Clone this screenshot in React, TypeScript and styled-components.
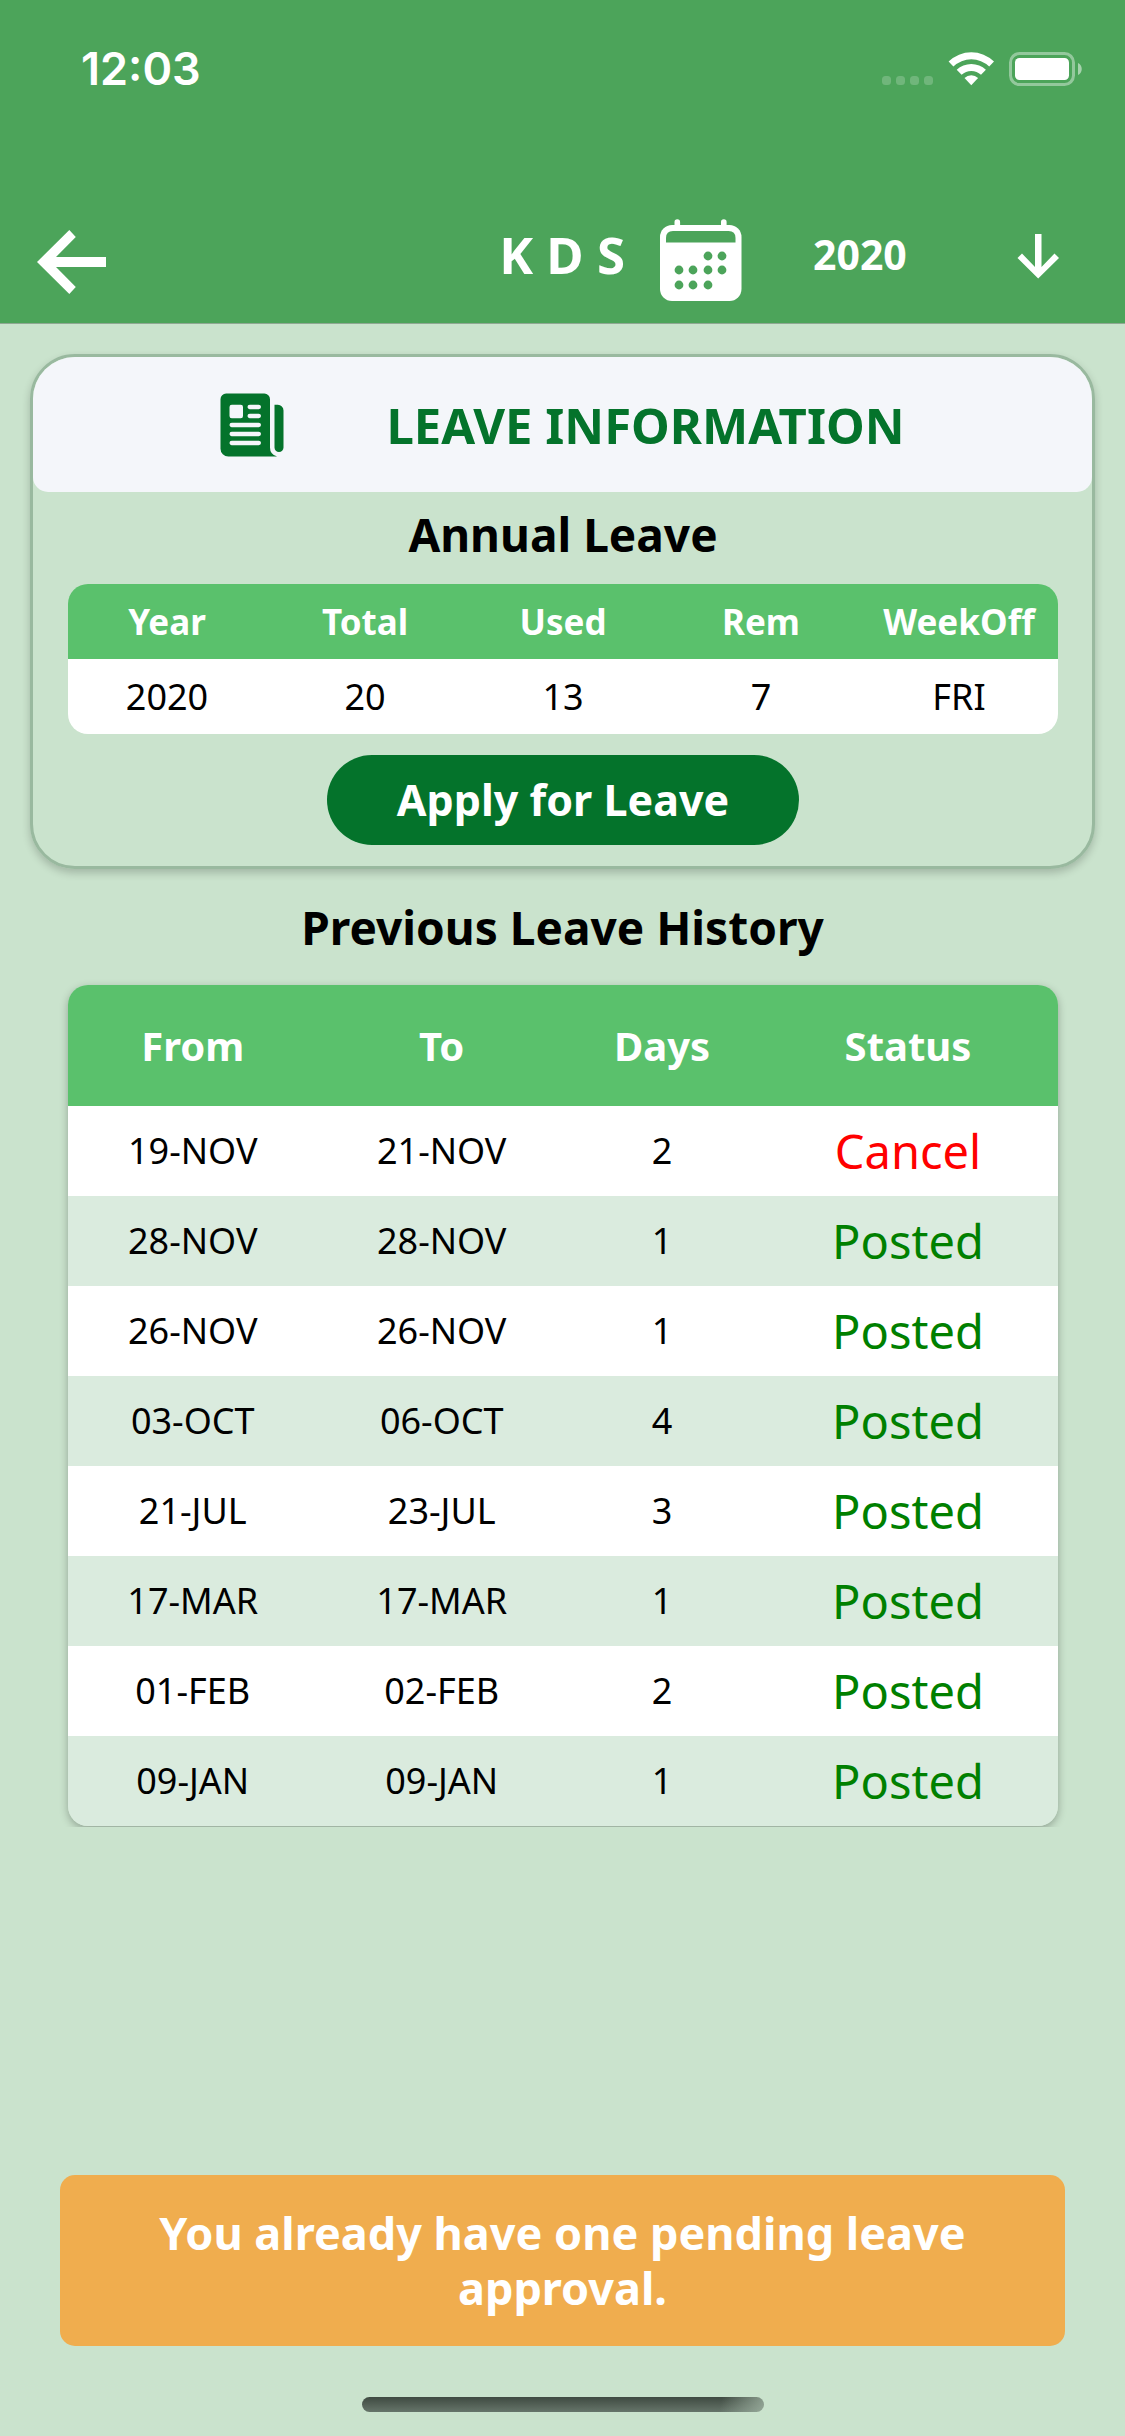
import React from "react";
import styled, { createGlobalStyle } from "styled-components";
import { IoNewspaper } from "react-icons/io5";

const color = {
  bar: "#4ca45a",
  page: "#cae3cd",
  tableHead: "#5ac16c",
  dark: "#04732b",
  stripe: "#daebde",
  border: "#99b99f",
  panel: "#f4f6fa",
  warning: "#f0ad4e",
};

const font = '"Noto Sans", "Open Sans", sans-serif';

const GlobalStyle = createGlobalStyle`
  *, *::before, *::after { box-sizing: border-box; }
  body { margin: 0; background: ${color.page}; }
  button, select { font: inherit; color: inherit; border: 0; background: none; padding: 0; margin: 0; }
  h1, h2, p { margin: 0; }
  svg { display: block; flex: none; }
`;

const Screen = styled.div`
  display: flex;
  flex-direction: column;
  min-height: 100vh;
  background: ${color.page};
  color: #000;
  font-family: ${font};
`;

const Header = styled.header`
  background: ${color.bar};
  border-bottom: 1px solid #8fa893;
  color: #fff;
`;

const StatusBar = styled.div`
  display: flex;
  align-items: center;
  justify-content: space-between;
  height: 132px;
  padding: 6px 43px 0 81px;
`;

const Clock = styled.time`
  font-family: Inter, sans-serif;
  font-size: 45px;
  font-weight: 600;
  line-height: 54px;
`;

const NavBar = styled.nav`
  display: flex;
  align-items: center;
  justify-content: space-between;
  padding: 74px 60px 21px 30px;
`;

const IconButton = styled.button`
  cursor: pointer;
`;

const NavGroup = styled.div`
  display: flex;
  align-items: center;
`;

const Brand = styled.span`
  font-size: 51px;
  font-weight: 700;
  line-height: 64px;
  margin-right: 28px;
`;

const YearPicker = styled.label`
  display: flex;
  align-items: center;
  gap: 104px;
  margin-left: 64px;
`;

const YearSelect = styled.select`
  appearance: none;
  font-size: 41px;
  font-weight: 700;
  line-height: 56px;
  outline: none;
`;

const Content = styled.main`
  padding: 30px 30px 0;
`;

const Card = styled.section`
  border: 3px solid ${color.border};
  border-radius: 45px;
  box-shadow: 0 4px 8px rgba(0, 0, 0, 0.2);
  overflow: hidden;
  padding-bottom: 21px;
`;

const CardHeader = styled.header`
  display: flex;
  align-items: center;
  justify-content: center;
  gap: 98px;
  height: 135px;
  padding-right: 4px;
  border-radius: 0 0 15px 15px;
  background: ${color.panel};
  color: ${color.dark};
`;

const CardTitle = styled.h1`
  font-size: 49px;
  font-weight: 700;
  line-height: 64px;
`;

const SectionTitle = styled.h2<{ $line: number }>`
  font-size: 46px;
  font-weight: 700;
  line-height: ${(p) => p.$line}px;
  text-align: center;
`;

const CardBody = styled.div`
  display: flex;
  flex-direction: column;
  padding: 0 34px 0 35px;
`;

const TableFrame = styled.div<{ $raised?: boolean }>`
  border-radius: 20px;
  ${(p) =>
    p.$raised
      ? `
    margin: 0 37px 0 38px;
    box-shadow: 0 3px 8px rgba(0, 0, 0, 0.28);
    clip-path: inset(-16px -16px -1px -16px);
  `
      : "margin-top: 8px;"}
`;

const Table = styled.table<{ $head: number; $row: number; $headText: number }>`
  width: 100%;
  table-layout: fixed;
  border-collapse: collapse;
  border-radius: 20px;
  overflow: hidden;
  text-align: center;
  font-size: 36px;
  line-height: 50px;

  th, td { padding: 0; }
  th {
    height: ${(p) => p.$head}px;
    background: ${color.tableHead};
    color: #fff;
    font-size: ${(p) => p.$headText}px;
    font-weight: 700;
  }
  td { height: ${(p) => p.$row}px; }
  tbody tr { background: #fff; }
  tbody tr:nth-child(even) { background: ${color.stripe}; }
`;

const Column = styled.col<{ $share: number }>`
  width: ${(p) => p.$share}%;
`;

const StatusCell = styled.td<{ $cancelled: boolean }>`
  color: ${(p) => (p.$cancelled ? "#ff0000" : "#008000")};
  font-size: 47px;
`;

const ApplyButton = styled.button`
  align-self: center;
  height: 90px;
  margin-top: 21px;
  padding: 0 70px;
  border-radius: 45px;
  background: ${color.dark};
  color: #fff;
  font-size: 43px;
  font-weight: 700;
  line-height: 60px;
  cursor: pointer;
`;

const Footer = styled.footer`
  display: flex;
  flex-direction: column;
  margin-top: auto;
  padding: 40px 60px 24px;
`;

const Toast = styled.p`
  padding: 30px 60px 31px;
  border-radius: 15px;
  background: ${color.warning};
  color: #fff;
  font-size: 45px;
  font-weight: 700;
  line-height: 55px;
  text-align: center;
`;

const HomeIndicator = styled.div`
  align-self: center;
  width: 40%;
  height: 15px;
  margin-top: 51px;
  border-radius: 8px;
  background:
    linear-gradient(100deg, transparent 89%, rgba(160, 180, 163, 0.8) 100%),
    linear-gradient(#3f4a41, #66756a);
`;

const StatusIcons = () => (
  <svg width="200" height="36" viewBox="882 51 200 36" fill="#fff" aria-hidden="true">
    <g opacity="0.2">
      <rect x="882" y="76" width="9" height="9" rx="3.5" />
      <rect x="896" y="76" width="9" height="9" rx="3.5" />
      <rect x="910" y="76" width="9" height="9" rx="3.5" />
      <rect x="924" y="76" width="9" height="9" rx="3.5" />
    </g>
    <path d="M948.6 61.500a32.500 32.500 0 0 1 45.400 0l-4.800 5a25.800 25.800 0 0 0 -35.800 0z" />
    <path d="M956.700 69.800a21 21 0 0 1 29.200 0l-4.900 5a14 14 0 0 0 -19.400 0z" />
    <path d="M964.500 78a10 10 0 0 1 13.600 0l-6.800 7.200z" />
    <rect x="1010.500" y="53.500" width="63" height="31" rx="9" fill="none" stroke="#fff" strokeWidth="3" opacity="0.4" />
    <rect x="1015" y="58" width="54" height="22" rx="4.500" />
    <path d="M1078 63c5 2 5 10 0 12z" opacity="0.5" />
  </svg>
);

const BackArrow = () => (
  <svg width="84" height="96" viewBox="30 206 84 96" fill="#fff" aria-hidden="true">
    <path d="M37 262L69.300 230L75.800 237L56 257H106V267H56L75.800 287L69.300 294Z" />
  </svg>
);

const dots = [
  [708, 256], [722, 256],
  [679, 270], [693, 270], [708, 270], [722, 270],
  [679, 285], [693, 285], [708, 285],
];

const CalendarIcon = () => (
  <svg width="96" height="96" viewBox="653 206 96 96" aria-hidden="true">
    <path fill="#fff" d="M674.500 226V222a2.800 2.800 0 0 1 5.600 0V226ZM721 226V222a2.800 2.800 0 0 1 5.600 0V226Z" />
    <rect x="660" y="225" width="81.500" height="76" rx="12" fill="#fff" />
    <path fill={color.bar} d="M666 242.500V238q0-7 7-7H728.500q7 0 7 7V242.500Z" />
    {dots.map(([x, y]) => (
      <circle key={`${x}-${y}`} cx={x} cy={y} r="4.400" fill={color.bar} />
    ))}
  </svg>
);

const DownArrow = () => (
  <svg width="54" height="96" viewBox="1011 206 54 96" fill="#fff" aria-hidden="true">
    <path d="M1035 234H1041.500V267L1054.500 253.500L1059 258L1038.200 278.500L1017.500 258L1022 253.500L1035 267Z" />
  </svg>
);

const allowance = [
  ["Year", "2020"],
  ["Total", "20"],
  ["Used", "13"],
  ["Rem", "7"],
  ["WeekOff", "FRI"],
];

const history = [
  { from: "19-NOV", to: "21-NOV", days: 2, status: "Cancel" },
  { from: "28-NOV", to: "28-NOV", days: 1, status: "Posted" },
  { from: "26-NOV", to: "26-NOV", days: 1, status: "Posted" },
  { from: "03-OCT", to: "06-OCT", days: 4, status: "Posted" },
  { from: "21-JUL", to: "23-JUL", days: 3, status: "Posted" },
  { from: "17-MAR", to: "17-MAR", days: 1, status: "Posted" },
  { from: "01-FEB", to: "02-FEB", days: 2, status: "Posted" },
  { from: "09-JAN", to: "09-JAN", days: 1, status: "Posted" },
];

export default function App() {
  return (
    <Screen>
      <GlobalStyle />
      <Header>
        <StatusBar>
          <Clock>12:03</Clock>
          <StatusIcons />
        </StatusBar>
        <NavBar>
          <IconButton type="button" aria-label="Back">
            <BackArrow />
          </IconButton>
          <NavGroup>
            <Brand>K D S</Brand>
            <CalendarIcon />
            <YearPicker>
              <YearSelect aria-label="Year" defaultValue="2020">
                <option>2020</option>
              </YearSelect>
              <DownArrow />
            </YearPicker>
          </NavGroup>
        </NavBar>
      </Header>

      <Content>
        <Card>
          <CardHeader>
            <IoNewspaper size={72} />
            <CardTitle>LEAVE INFORMATION</CardTitle>
          </CardHeader>
          <CardBody>
            <SectionTitle $line={84}>Annual Leave</SectionTitle>
            <TableFrame>
              <Table $head={75} $row={75} $headText={35}>
                <thead>
                  <tr>
                    {allowance.map(([name]) => (
                      <th key={name} scope="col">{name}</th>
                    ))}
                  </tr>
                </thead>
                <tbody>
                  <tr>
                    {allowance.map(([name, value]) => (
                      <td key={name}>{value}</td>
                    ))}
                  </tr>
                </tbody>
              </Table>
            </TableFrame>
            <ApplyButton type="button">Apply for Leave</ApplyButton>
          </CardBody>
        </Card>

        <SectionTitle $line={116}>Previous Leave History</SectionTitle>
        <TableFrame $raised>
          <Table $head={121} $row={90} $headText={40}>
            <colgroup>
              <Column $share={25.2} />
              <Column $share={25.1} />
              <Column $share={19.4} />
              <Column $share={30.3} />
            </colgroup>
            <thead>
              <tr>
                <th scope="col">From</th>
                <th scope="col">To</th>
                <th scope="col">Days</th>
                <th scope="col">Status</th>
              </tr>
            </thead>
            <tbody>
              {history.map((leave) => (
                <tr key={leave.from}>
                  <td>{leave.from}</td>
                  <td>{leave.to}</td>
                  <td>{leave.days}</td>
                  <StatusCell $cancelled={leave.status === "Cancel"}>{leave.status}</StatusCell>
                </tr>
              ))}
            </tbody>
          </Table>
        </TableFrame>
      </Content>

      <Footer>
        <Toast role="status">You already have one pending leave approval.</Toast>
        <HomeIndicator />
      </Footer>
    </Screen>
  );
}
